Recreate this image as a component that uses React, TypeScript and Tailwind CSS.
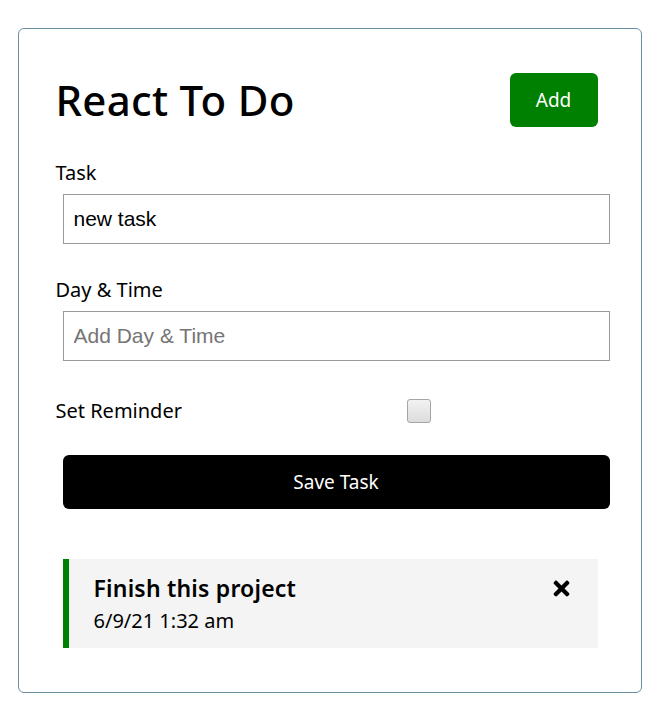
import { FaTimes } from "react-icons/fa";

const App = () => {
  return (
    <div className="min-h-screen bg-white pt-[28px] font-['Noto_Sans',sans-serif] text-black">
      <div className="mx-auto w-[624px] rounded-[6px] border border-[#6a8fa3] px-[37px] pt-[38px] pb-[38px]">
        <header className="mb-[25px] flex items-center justify-between">
          <h1 className="text-[42px] leading-[60px] font-medium tracking-[0.3px]">React To Do</h1>
          <button className="my-[6px] mr-[6px] h-[54px] w-[88px] rounded-[6px] bg-[#008000] text-[19px] text-white">
            Add
          </button>
        </header>

        <form>
          <div>
            <label className="block text-[20px] leading-[30px]">Task</label>
            <input
              type="text"
              defaultValue="new task"
              className="mt-[6px] ml-[7px] block h-[50px] w-[547px] border border-[#9a9a9a] px-[10px] font-['Liberation_Sans',Arial,sans-serif] text-[21px] text-black outline-none"
            />
          </div>

          <div className="mt-[31px]">
            <label className="block text-[20px] leading-[30px]">Day &amp; Time</label>
            <input
              type="text"
              placeholder="Add Day & Time"
              className="mt-[6px] ml-[7px] block h-[50px] w-[547px] border border-[#9a9a9a] px-[10px] font-['Liberation_Sans',Arial,sans-serif] text-[21px] text-black outline-none placeholder:text-[#757575]"
            />
          </div>

          <div className="mt-[37px] flex h-[26px] items-center">
            <label className="flex-1 text-[20px] leading-[30px]">Set Reminder</label>
            <div className="flex flex-[2] justify-center pr-[3px]">
              <span className="block h-[24px] w-[24px] rounded-[3px] border border-[#a5a5a5] bg-gradient-to-b from-[#f2f2f2] to-[#dcdcdc]" />
            </div>
          </div>

          <button
            type="button"
            className="mt-[31px] ml-[7px] block h-[54px] w-[547px] rounded-[6px] bg-black text-[19px] text-white"
          >
            Save Task
          </button>
        </form>

        <div className="mt-[50px] mb-[6px] ml-[7px] w-[535px] border-l-[6px] border-[#008000] bg-[#f4f4f4] px-[25px] py-[12px]">
          <h3 className="flex items-center justify-between text-[23px] leading-[35px] font-semibold tracking-[0.2px]">
            Finish this project
            <FaTimes className="mr-[3px] h-[23px] w-[17px]" />
          </h3>
          <p className="text-[20px] leading-[30px]">6/9/21 1:32 am</p>
        </div>
      </div>
    </div>
  );
};

export default App;
